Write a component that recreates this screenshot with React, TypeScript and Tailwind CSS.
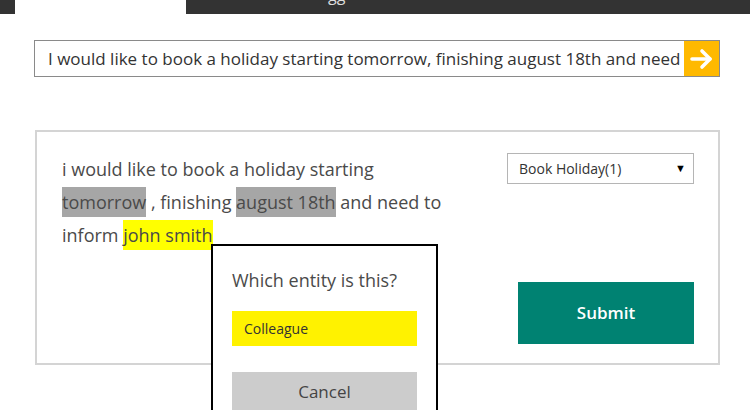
const font = { fontFamily: '"Open Sans", "Noto Sans", sans-serif' };

function ArrowIcon() {
  return (
    <svg width="26" height="24" viewBox="0 0 26 24" fill="none">
      <path d="M3 12h18" stroke="white" strokeWidth="3.6" strokeLinecap="round" />
      <path d="M13 4l8 8-8 8" stroke="white" strokeWidth="3.6" strokeLinecap="round" strokeLinejoin="round" />
    </svg>
  );
}

export default function App() {
  return (
    <div className="relative h-[410px] w-[750px] overflow-hidden bg-white text-[#333]" style={font}>
      {/* top nav strip */}
      <div className="flex h-[14px]">
        <div className="w-[15px] bg-[#333]" />
        <div className="w-[171px] bg-white" />
        <div className="flex-1 overflow-hidden bg-[#333]">
          <span className="-mt-[13px] ml-[142px] block text-[16px] leading-[16px] text-[#ddd]">gg</span>
        </div>
      </div>

      <div className="ml-[34px] w-[686px]">
        {/* utterance input */}
        <div className="mt-[26px] flex h-[37px] border border-[#8a8a8a] bg-white">
          <input
            readOnly
            className="min-w-0 flex-1 bg-transparent pl-[13px] text-[17px] text-[#333] outline-none"
            style={font}
            defaultValue="I would like to book a holiday starting tomorrow, finishing august 18th and need to inform john smith"
          />
          <button className="flex w-[35px] items-center justify-center bg-[#ffb900]">
            <ArrowIcon />
          </button>
        </div>

        {/* labelling card */}
        <div className="mt-[53px] ml-[1px] flex justify-between border-2 border-[#d4d4d4] pt-[21px] pr-[24px] pb-[19px] pl-[25px]">
          <p className="text-[18px] leading-[33px] text-[#4a4a4a]">
            i would like to book a holiday starting
            <br />
            <span className="bg-[#a6a6a6] py-[3px]">tomorrow</span> , finishing{' '}
            <span className="bg-[#a6a6a6] py-[3px]">august 18th</span> and need to
            <br />
            inform <span className="bg-[#ffff00] py-[3px]">john smith</span>
          </p>

          <div className="flex flex-col items-end">
            <div className="flex h-[31px] w-[187px] items-center justify-between border border-[#b5b5b5] pr-[7px] pl-[11px] text-[14px] text-[#333]">
              <span>Book Holiday(1)</span>
              <span className="text-[11px] text-black">▼</span>
            </div>
            <button className="mt-[98px] h-[62px] w-[176px] bg-[#008272] text-[17px] font-semibold text-white">
              Submit
            </button>
          </div>
        </div>
      </div>

      {/* entity picker popover */}
      <div className="absolute top-[244px] left-[211px] h-[190px] w-[227px] border-2 border-black bg-white px-[19px] pt-[20px]">
        <p className="text-[18px] leading-[28px] text-[#4a4a4a]">Which entity is this?</p>
        <div className="mt-[17px] flex h-[35px] items-center bg-[#fff200] pl-[12px] text-[14px] text-[#333]">
          Colleague
        </div>
        <button className="mt-[26px] flex h-[40px] w-full items-center justify-center bg-[#cccccc] text-[17px] text-[#444]">
          Cancel
        </button>
      </div>
    </div>
  );
}
